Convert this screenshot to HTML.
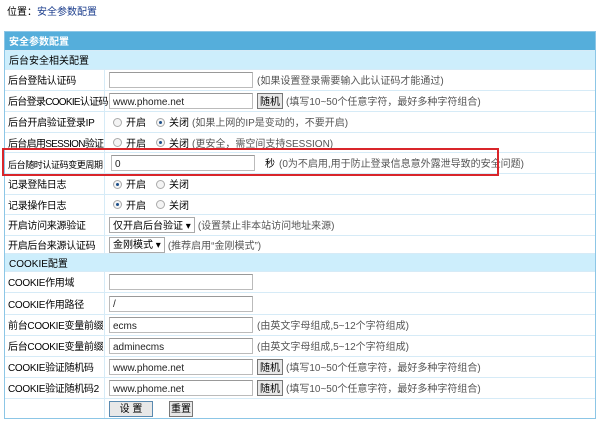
<!DOCTYPE html>
<html><head><meta charset="utf-8"><style>
body{margin:0;width:600px;height:423px;background:#fff;font-family:"Liberation Sans","Noto Sans CJK SC",sans-serif;font-size:10px;line-height:12px;color:#000;position:relative;overflow:hidden}
.pos{position:absolute;left:7px;top:7px;font-size:10px}
.pos span{color:#1a3c8c}
.tbl{position:absolute;left:4px;top:31px;width:592px;height:388px;border:1px solid #8cc6e6;box-sizing:border-box;background:#fff}
.r{position:absolute;left:0;width:590px;border-bottom:1px solid #d6ebf7;box-sizing:border-box;white-space:nowrap}
.h{background:#55aedb;color:#fff;font-weight:bold;padding-left:4px;display:flex;align-items:center;padding-top:4px}
.s{background:#cdeefc;padding-left:4px;display:flex;align-items:center;padding-top:4px}
.l{position:absolute;left:0;top:0;width:100px;height:100%;border-right:1px solid #d6ebf7;padding-left:3px;padding-top:4px;box-sizing:border-box;display:flex;align-items:center;white-space:nowrap;letter-spacing:-0.3px}
.c{position:absolute;left:104px;top:0;right:0;height:100%;display:flex;align-items:center;color:#555}
.t{position:relative;top:2px}
.in{width:144px;height:16px;border:1px solid #bbb;border-top-color:#999;box-sizing:border-box;color:#222;padding-left:3px;padding-top:3px;margin-right:4px;background:#fff;display:flex;align-items:center}
.btn{border:1px solid #777;background:#e8e8e8;padding:3px 2px 0;height:16px;box-sizing:border-box;color:#000;margin-right:3px;display:inline-flex;align-items:center;justify-content:center}
.rad{display:inline-block;width:9px;height:9px;border:1px solid #aaa;border-radius:50%;margin:0 4px 0 4px;box-sizing:border-box;background:#f4f4f4;position:relative}
.rad.on::after{content:"";position:absolute;left:2px;top:2px;width:3px;height:3px;border-radius:50%;background:#1d4f8a}
.k{color:#000;margin-right:6px;position:relative;top:2px}
.sel{border:1px solid #aaa;height:16px;box-sizing:border-box;padding:3px 3px 0;color:#000;margin-right:3px;background:#fff;display:inline-flex;align-items:center}
</style></head><body>
<div class="pos">位置：<span>安全参数配置</span></div>
<div class="tbl">
<div class="r h" style="top:0;height:19px">安全参数配置</div>
<div class="r s" style="top:19px;height:19px">后台安全相关配置</div>
<div class="r" style="top:38px;height:21px"><div class="l">后台登陆认证码</div><div class="c"><div class="in"></div><span class="t">(如果设置登录需要输入此认证码才能通过)</span></div></div>
<div class="r" style="top:59px;height:21px"><div class="l" style="letter-spacing:-0.7px">后台登录COOKIE认证码</div><div class="c"><div class="in">www.phome.net</div><span class="btn">随机</span><span class="t">(填写10~50个任意字符，最好多种字符组合)</span></div></div>
<div class="r" style="top:80px;height:21px"><div class="l">后台开启验证登录IP</div><div class="c"><span class="rad"></span><span class="k">开启</span><span class="rad on"></span><span class="k" style="margin-right:3px">关闭</span><span class="t">(如果上网的IP是变动的，不要开启)</span></div></div>
<div class="r" style="top:101px;height:20px"><div class="l" style="letter-spacing:-0.7px">后台启用SESSION验证</div><div class="c"><span class="rad"></span><span class="k">开启</span><span class="rad on"></span><span class="k" style="margin-right:3px">关闭</span><span class="t">(更安全，需空间支持SESSION)</span></div></div>
<div class="r" style="top:121px;height:21px"><div class="l" style="font-size:9px;letter-spacing:-0.4px">后台随时认证码变更周期</div><div class="c"><div class="in" style="width:144px;margin-left:2px;margin-right:10px">0</div><span class="k" style="margin-right:4px">秒</span><span class="t">(0为不启用,用于防止登录信息意外露泄导致的安全问题)</span></div></div>
<div class="r" style="top:142px;height:21px"><div class="l">记录登陆日志</div><div class="c"><span class="rad on"></span><span class="k">开启</span><span class="rad"></span><span class="k">关闭</span></div></div>
<div class="r" style="top:163px;height:20px"><div class="l">记录操作日志</div><div class="c"><span class="rad on"></span><span class="k">开启</span><span class="rad"></span><span class="k">关闭</span></div></div>
<div class="r" style="top:183px;height:21px"><div class="l">开启访问来源验证</div><div class="c"><span class="sel">仅开启后台验证 ▾</span><span class="t">(设置禁止非本站访问地址来源)</span></div></div>
<div class="r" style="top:204px;height:18px"><div class="l">开启后台来源认证码</div><div class="c"><span class="sel">金刚模式 ▾</span><span class="t">(推荐启用“金刚模式”)</span></div></div>
<div class="r s" style="top:222px;height:18px">COOKIE配置</div>
<div class="r" style="top:240px;height:21px"><div class="l">COOKIE作用域</div><div class="c"><div class="in"></div></div></div>
<div class="r" style="top:261px;height:22px"><div class="l">COOKIE作用路径</div><div class="c"><div class="in">/</div></div></div>
<div class="r" style="top:283px;height:21px"><div class="l">前台COOKIE变量前缀</div><div class="c"><div class="in">ecms</div><span class="t">(由英文字母组成,5~12个字符组成)</span></div></div>
<div class="r" style="top:304px;height:21px"><div class="l">后台COOKIE变量前缀</div><div class="c"><div class="in">adminecms</div><span class="t">(由英文字母组成,5~12个字符组成)</span></div></div>
<div class="r" style="top:325px;height:21px"><div class="l">COOKIE验证随机码</div><div class="c"><div class="in">www.phome.net</div><span class="btn">随机</span><span class="t">(填写10~50个任意字符，最好多种字符组合)</span></div></div>
<div class="r" style="top:346px;height:21px"><div class="l">COOKIE验证随机码2</div><div class="c"><div class="in">www.phome.net</div><span class="btn">随机</span><span class="t">(填写10~50个任意字符，最好多种字符组合)</span></div></div>
<div class="r" style="top:367px;height:19px;border-bottom:none"><div class="l"></div><div class="c"><span class="btn" style="width:44px;margin-left:0;margin-right:16px;border-color:#5a8ab0">设 置</span><span class="btn" style="width:24px">重置</span></div></div>
</div>
<div style="position:absolute;left:2px;top:148px;width:497px;height:28px;border:2px solid #d9252a;box-sizing:border-box"></div>
</body></html>
